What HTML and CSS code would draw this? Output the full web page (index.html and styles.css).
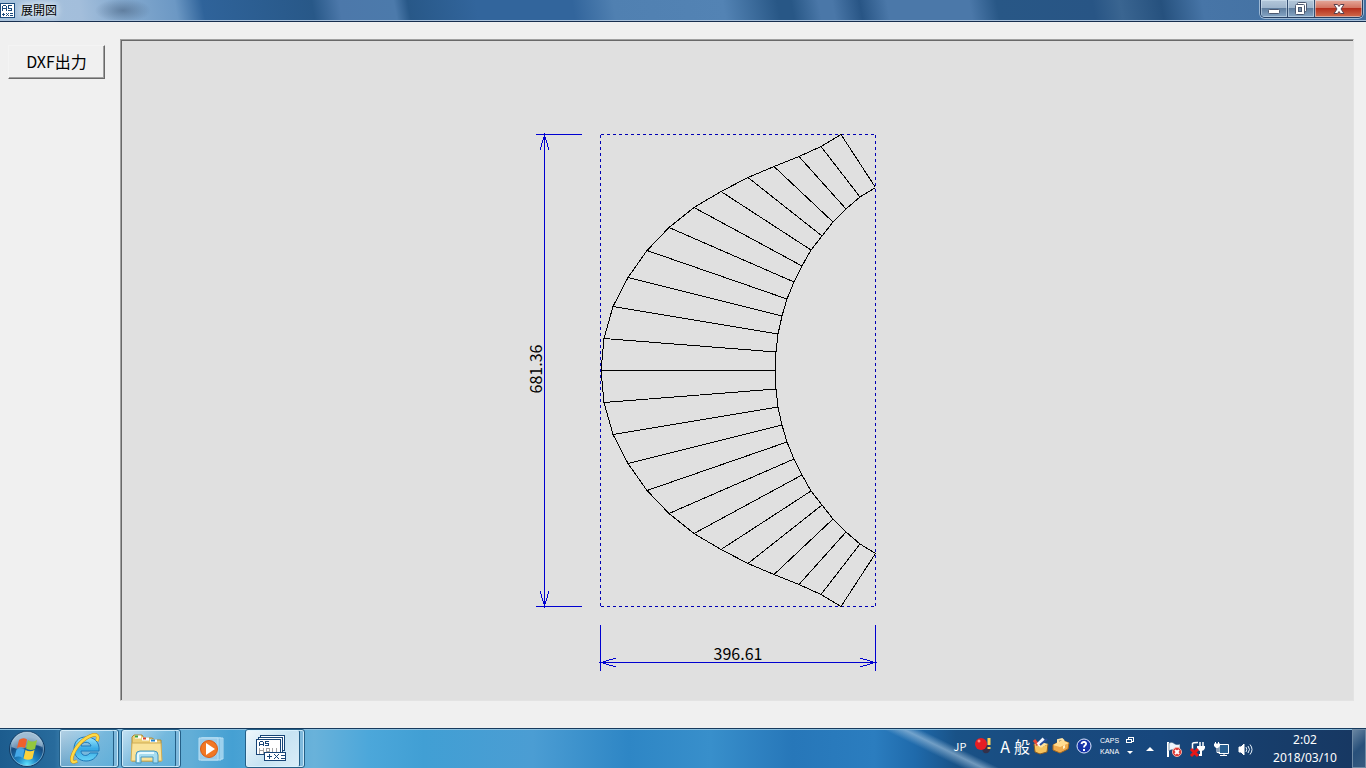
FILE: index.html
```html
<!DOCTYPE html>
<html lang="ja">
<head>
  <meta charset="UTF-8">
  <meta name="viewport" content="width=device-width, initial-scale=1.0">
  <title>展開図</title>
  <link rel="stylesheet" href="styles.css">
</head>
<body>

  <header class="titlebar">
    <svg class="app-icon" viewBox="0 0 15 15" shape-rendering="crispEdges" aria-hidden="true">
      <rect x="0.5" y="0.5" width="14" height="14" fill="#fff" stroke="#1b4a7c"/>
      <path d="M2.500 8V3M3 2.500H6M6.500 3V8M3 5.500H6M12 2.500H8.500V5.500H11.500V7.500H8M2 11.500H5M3.500 10V13M6 10L9 13M9 10L6 13M10 10.500H13M10 12.500H13" fill="none" stroke="#1b4a7c"/>
    </svg>
    <h1>展開図</h1>
    <div class="window-buttons">
      <button type="button" class="min" aria-label="最小化">
        <svg width="14" height="14" viewBox="0 0 14 14"><rect x="1.500" y="7.500" width="11" height="4" rx="1" fill="#fff" stroke="#4b5870"/></svg>
      </button>
      <button type="button" class="max" aria-label="元に戻す">
        <svg width="14" height="14" viewBox="0 0 14 14"><g fill="#fff" stroke="#4b5870"><rect x="3.500" y="0.500" width="9" height="9" rx="1"/><rect x="1.500" y="2.500" width="9" height="10" rx="1"/><rect x="4.500" y="5.500" width="3" height="4" fill="#7892ac"/></g></svg>
      </button>
      <button type="button" class="close" aria-label="閉じる">
        <svg width="14" height="14" viewBox="0 0 14 14"><path d="M2 2.500H5.500L7 4.500L8.500 2.500H12L9 7L12 11.500H8.500L7 9.500L5.500 11.500H2L5 7Z" fill="#fff" stroke="#59404c"/></svg>
      </button>
    </div>
  </header>

  <main class="window">
    <button type="button" class="export">DXF出力</button>

    <div class="canvas">
      <svg viewBox="122 41 1231 659" role="img" aria-label="展開図 396.61 × 681.36">
        <!-- bounding box -->
        <path class="bounds" d="M600.500 134.500H875.500M600.500 606.500H875.500M600.500 134.500V606.500M875.500 134.500V606.500"/>

        <!-- upper half of the pattern, mirrored below -->
        <g id="half" class="pattern">
          <path d="M841 134.500L821 146.500L799 156.500L774 166.500L748 177.500L721 191.500L694 207.500L669 227.500L647 250.500L628 277.500L613 306.500L604 338.500L601 370.500"/>
          <path d="M875.500 187.500L860 197L846 209L833 222L822 236L811 250L802 266L794 282L787 299L782 316L778 334L776 352L775.500 370.500"/>
          <path d="M841 134.500L875.500 187.500M821 146.500L860 197M799 156.500L846 209M774 166.500L833 222M748 177.500L822 236M721 191.500L811 250M694 207.500L802 266M669 227.500L794 282M647 250.500L787 299M628 277.500L782 316M613 306.500L778 334M604 338.500L776 352"/>
        </g>
        <use href="#half" transform="matrix(1 0 0 -1 0 741)"/>
        <path class="pattern" d="M601 370.500H776"/>

        <!-- dimensions -->
        <path class="dim" d="M536 134.500H582M536 606.500H582M544.500 134.500V606.500M540 150L544.500 135L549 150M540 591L544.500 606L549 591"/>
        <path class="dim" d="M600.500 625V671M875.500 625V671M600.500 662.500H875.500M616 658L601 662.500L616 667M860 658L875 662.500L860 667"/>
        <text class="value" x="738" y="660" text-anchor="middle">396.61</text>
        <text class="value" transform="translate(542 369) rotate(-90)" text-anchor="middle">681.36</text>
      </svg>
    </div>
  </main>

  <footer class="taskbar">
    <button type="button" class="start" aria-label="スタート">
      <svg width="38" height="38" viewBox="0 0 38 38">
        <defs>
          <radialGradient id="orb" cx="50%" cy="95%" r="80%">
            <stop offset="0" stop-color="#5fe4ff"/><stop offset=".35" stop-color="#1e84c4"/><stop offset=".75" stop-color="#164b80"/><stop offset="1" stop-color="#6e96b8"/>
          </radialGradient>
        </defs>
        <circle cx="19" cy="19" r="17.500" fill="url(#orb)" stroke="#123a62"/>
        <circle cx="19" cy="19" r="16.500" fill="none" stroke="#9dc4dc" stroke-opacity=".6"/>
        <path d="M3.500 17A15.500 15.500 0 0 1 34.500 17Q26 13 19 17T3.500 17Z" fill="#dcecf5" opacity=".45"/>
        <path d="M11 10Q15 7 19 9.500L17 18Q13 16 9 18Z" fill="#ee602c"/>
        <path d="M20 10Q24 13 29 10L27 19Q22 21 18 18.500Z" fill="#93c83e"/>
        <path d="M8.500 19.500Q13 17.500 16.500 19.500L14.500 28Q11 25.500 6.500 27.500Z" fill="#45a8e8"/>
        <path d="M17.500 20Q22 22.500 26.500 20L24.500 28.500Q20 31 15.500 28.500Z" fill="#fcd23c"/>
      </svg>
    </button>

    <nav class="tasks" aria-label="タスク">
      <button type="button" class="task open" aria-label="Internet Explorer">
        <svg width="34" height="34" viewBox="0 0 34 34">
          <defs><linearGradient id="ie" x2="0" y2="1"><stop stop-color="#9deaff"/><stop offset=".5" stop-color="#38a9e4"/><stop offset="1" stop-color="#66d3f7"/></linearGradient></defs>
          <path d="M18 5C10 5 6 10 6 17C6 24 11 29 18 29C24 29 28 26 30 21H22C19 25 13 24 13 19H31C32 10 26 5 18 5ZM13 14C14 9 22 9 23 14Z" fill="url(#ie)" stroke="#1e78b8"/>
          <path d="M29 9C31 4 29 2 25 3C15 6 7 15 4 25C3 30 5 31 9 29" fill="none" stroke="#c98c15" stroke-width="3.500"/>
          <path d="M29 9C31 4 29 2 25 3C15 6 7 15 4 25C3 30 5 31 9 29" fill="none" stroke="#ffda45" stroke-width="2.500"/>
        </svg>
      </button>
      <button type="button" class="task open" aria-label="エクスプローラー">
        <svg width="34" height="34" viewBox="0 0 34 34">
          <path d="M2 29V5L4 3H12L14 6H22L25 8H31V29Z" fill="#eed17a" stroke="#ac8a36"/>
          <path d="M5 5H11M12 7H19M20 9H27" stroke="#fff" stroke-width="3"/>
          <path d="M5 4.500H8" stroke="#3ba33c" stroke-width="2"/><path d="M13 6.500H16" stroke="#d8422e" stroke-width="2"/><path d="M21 8.500H25" stroke="#2486cf" stroke-width="2"/>
          <path d="M2 11H31L32 29H1Z" fill="#f9e39b" stroke="#d0ae57"/>
          <path d="M6 31V23Q6 19 10 19H24Q28 19 28 23V31H23V25H11V31Z" fill="#a6dcf0" stroke="#4796be"/>
          <path d="M8 30V23Q8 21 11 21H24" fill="none" stroke="#e6faff" stroke-width="2"/>
        </svg>
      </button>
      <button type="button" class="task" aria-label="Windows Media Player">
        <svg width="34" height="34" viewBox="0 0 34 34">
          <path d="M10 6H31V27H10Z" fill="#84c3e7" stroke="#b6dff4"/><path d="M9 6H29V28H9Z" fill="#84c3e7" stroke="#b6dff4"/><path d="M7 6H26V28H7Z" fill="#9acceb" stroke="#bae0f4"/>
          <circle cx="17" cy="17" r="8.500" fill="#f17724" stroke="#d85c18"/>
          <path d="M14 11L23 17L14 23Z" fill="#fff"/>
        </svg>
      </button>
      <button type="button" class="task open active" aria-label="AS 展開図">
        <svg width="34" height="34" viewBox="0 0 34 34" shape-rendering="crispEdges">
          <g fill="#fff" stroke="#174476"><path d="M6.500 3.500H30.500V18.500H6.500Z"/><path d="M4.500 5.500H28.500V20.500H4.500Z"/><path d="M2.500 7.500H26.500V22.500H2.500Z"/></g>
          <path d="M5.500 14V10M6 9.500H9M9.500 10V14M6 12.500H9M15 9.500H11.500V11.500H14.500V13.500H11" fill="none" stroke="#174476"/>
          <path d="M5.500 16V22M9.500 16V22M5 18.500H9M12.500 22V16.500H15.500V22M12 19.500H15M18.500 16V22M22.500 16V22" fill="none" stroke="#a3a3a3"/>
          <path d="M10.500 20.500H31.500V28.500H10.500Z" fill="#fff" stroke="#174476"/>
          <path d="M13 24.500H18M15.500 22V27M20 22L25 27M25 22L20 27M27 23.500H31M27 26.500H31" fill="none" stroke="#174476"/>
        </svg>
      </button>
    </nav>

    <div class="ime">
      <button type="button" class="lang">JP</button>
      <button type="button" class="brand" aria-label="IME">
        <svg width="18" height="18" viewBox="0 0 18 18"><path d="M10 8Q15 7 16 12Q16 17 10 16Q7 13 10 8Z" fill="#34314a"/><circle cx="7" cy="7" r="6" fill="#e51e24"/><circle cx="5" cy="4" r="1.500" fill="#ff8a80"/><path d="M15 1V8M15 10V12" stroke="#ffd257" stroke-width="3"/></svg>
      </button>
      <button type="button" class="mode">A</button>
      <button type="button" class="kanji">般</button>
      <button type="button" class="tool" aria-label="IMEパッド">
        <svg width="18" height="18" viewBox="0 0 18 18"><path d="M2 7L3 15L8 17L15 15L16 7L9 10Z" fill="#f5c35e" stroke="#8a5c22"/><path d="M2 7L9 5L16 7L9 11Z" fill="#ffe19a"/><path d="M2 3L6 8" stroke="#e64632" stroke-width="3"/><path d="M6 8L12 2" stroke="#f4f6ff" stroke-width="4"/><path d="M8 8L15 2" stroke="#284c9c" stroke-width="2"/></svg>
      </button>
      <button type="button" class="tool" aria-label="ツール">
        <svg width="18" height="18" viewBox="0 0 18 18"><path d="M1 8L10 3L17 6L16 12L8 16L1 13Z" fill="#efab4d" stroke="#a56920"/><path d="M1 8L10 3L17 6L8 10Z" fill="#ffdd92"/><path d="M6 6V3L10 2L12 4" fill="none" stroke="#ffe4a6" stroke-width="2"/><path d="M11 9L13 8V11L11 12Z" fill="#fff1c4"/></svg>
      </button>
      <button type="button" class="help" aria-label="ヘルプ">
        <svg width="16" height="16" viewBox="0 0 16 16"><circle cx="8" cy="8" r="7" fill="#1533a8" stroke="#dfe8ff"/><path d="M5.500 6Q6 3.500 8.500 4Q11 5 9.500 7Q8 8 8 9.500M8 11V13" fill="none" stroke="#fff" stroke-width="2"/></svg>
      </button>
      <div class="locks"><span>CAPS</span><span>KANA</span></div>
      <div class="bar-options">
        <button type="button" aria-label="言語バーの表示"><svg width="10" height="8" viewBox="0 0 10 8" shape-rendering="crispEdges"><path d="M3.500 3V1.500H8.500V5.500H7M1.500 3.500H6.500V6.500H1.500Z" fill="none" stroke="#fff"/></svg></button>
        <button type="button" aria-label="オプション"><svg width="10" height="8" viewBox="0 0 10 8"><path d="M2 3H8L5 6Z" fill="#fff"/></svg></button>
      </div>
    </div>

    <div class="tray">
      <button type="button" class="more" aria-label="隠れているインジケーターを表示します"><svg width="8" height="8" viewBox="0 0 8 8"><path d="M0 6L4 2L8 6Z" fill="#fff"/></svg></button>
      <button type="button" aria-label="アクション センター">
        <svg width="18" height="18" viewBox="0 0 18 18"><path d="M3 2V17" stroke="#fff" stroke-width="2"/><path d="M4 3Q7 1 10 4Q12 5 15 4V11Q11 12 9 10Q6 9 4 11Z" fill="#eef5fb" stroke="#23486b" stroke-width=".500"/><circle cx="12" cy="12" r="4.500" fill="#dc2e2b" stroke="#f7b7aa"/><path d="M10 10L14 14M14 10L10 14" stroke="#fff" stroke-width="2"/></svg>
      </button>
      <button type="button" aria-label="電源">
        <svg width="18" height="18" viewBox="0 0 18 18"><path d="M3.500 9V3.500Q4 2.500 9 2.500" fill="none" stroke="#fff" stroke-width="1.500"/><path d="M11 2V6M14 2V6" stroke="#fff" stroke-width="1.500"/><path d="M8 6H16V8Q15 11 12 11Q9 11 8 8Z" fill="#fff"/><path d="M12 10V15H10" fill="none" stroke="#fff" stroke-width="2"/><path d="M2 9L9 16M9 9L2 16" stroke="#e81717" stroke-width="3"/></svg>
      </button>
      <button type="button" aria-label="ネットワーク">
        <svg width="18" height="18" viewBox="0 0 18 18"><path d="M6 4.500H15.500V13.500H6Z" fill="#285f91" stroke="#fff"/><path d="M11 14V16M7 15.500H14" stroke="#fff"/><path d="M2.500 2V4M5.500 2V4M4 7V12.500H7" stroke="#fff" fill="none"/><path d="M1 3.500H7V6L5 8H3L1 6Z" fill="#fff"/></svg>
      </button>
      <button type="button" aria-label="音量">
        <svg width="18" height="18" viewBox="0 0 18 18"><path d="M2 7H4L7 4V15L4 12H2Z" fill="#fff" stroke="#fff"/><path d="M9 7Q10.500 9.500 9 12M11 6Q14 9.500 11 13M13 4.500Q17 9.500 13 14.500" fill="none" stroke="#e7f2fb"/></svg>
      </button>
    </div>
    <button type="button" class="clock"><time datetime="02:02">2:02</time><time datetime="2018-03-10">2018/03/10</time></button>
    <button type="button" class="show-desktop" aria-label="デスクトップの表示"></button>
  </footer>

</body>
</html>
```
FILE: styles.css
```css
* {
  box-sizing: border-box;
}

body {
  margin: 0;
  min-height: 100vh;
  display: flex;
  flex-direction: column;
  background-color: #f0f0f0;
  font-family: "Noto Sans CJK JP", sans-serif;
  color: #000;
}

button {
  padding: 0;
  border: 0;
  background: none;
  color: inherit;
  font: inherit;
}

svg {
  display: block;
}

/* title bar */
.titlebar {
  height: 22px;
  display: flex;
  align-items: center;
  border-bottom: 1px solid #182f50;
  box-shadow: inset 0 -1px #a9c1da;
  background:
    radial-gradient(ellipse 28px 12px at 9% 50%, rgba(72, 98, 128, 0.6), transparent),
    linear-gradient(80deg, #a5c2dd 0, #a3bedb 6%, #86abd0 9%, #6c98c4 13%, #2f639a 15%, #285888 23%, #4c78aa 25%, #4c7aab 29%, #285888 30%, #32659c 35%, #32659c 42%, #5080b1 45%, #5383b4 53%, #285786 57%, #285786 58%, #4a77a8 60%, #4a77a8 61%, #285585 63%, #4b78a9 65%, #4b78a9 71%, #285786 73%, #285585 80%, #3a6591 82%, #26517e 85%, #4775a7 88%, #416f9f 100%);
}

.app-icon {
  width: 15px;
  height: 15px;
}

.titlebar h1 {
  align-self: flex-start;
  margin: 0 auto 0 6px;
  font-size: 12px;
  line-height: 19px;
  font-weight: 400;
  text-shadow: 0 0 6px #fff, 0 0 10px #fff;
}

.window-buttons {
  align-self: flex-start;
  display: flex;
  height: 18px;
  margin-right: 3px;
  border: 1px solid #263f62;
  border-top: 0;
  border-radius: 0 0 5px 5px;
  box-shadow: 0 0 0 1px #9db9d5;
  overflow: hidden;
}

.window-buttons button {
  width: 27px;
  display: flex;
  align-items: center;
  justify-content: center;
  border-right: 1px solid #324d70;
  background: linear-gradient(#b4c7da 0, #9eb5cc 45%, #607e9f 50%, #85a5c5 100%);
  box-shadow: inset 0 0 0 1px rgba(220, 235, 248, 0.5);
}

.window-buttons .close {
  width: 47px;
  border-right: 0;
  background: linear-gradient(#e5aa9c 0, #d37562 45%, #b6301d 50%, #d16c4c 100%);
}

/* window content */
.window {
  flex: 1;
  min-height: 0;
  display: flex;
  align-items: flex-start;
  gap: 15px;
  padding: 17px 12px 27px 8px;
}

.export {
  width: 97px;
  height: 34px;
  margin-top: 6px;
  padding-bottom: 2px;
  border: 1px solid;
  border-color: #f4f4f4 #696969 #696969 #f4f4f4;
  box-shadow: inset -1px -1px #a0a0a0;
  font-size: 16px;
}

.canvas {
  flex: 1;
  align-self: stretch;
  border: 1px solid;
  border-color: #a0a0a0 #e3e3e3 #e3e3e3 #a0a0a0;
  box-shadow: inset 1px 1px #696969;
  background-color: #e0e0e0;
  padding: 1px 0 0 1px;
}

.canvas svg {
  width: 100%;
  height: 100%;
}

.pattern,
.bounds,
.dim {
  fill: none;
  stroke: #000;
  shape-rendering: crispEdges;
}

.bounds {
  stroke: #0000b4;
  stroke-dasharray: 3 3;
}

.dim {
  stroke: #0000d0;
}

.value {
  font-size: 16px;
}

/* taskbar */
.taskbar {
  height: 40px;
  display: flex;
  align-items: stretch;
  border-top: 1px solid #173a5d;
  box-shadow: inset 0 1px #8cc0df;
  background:
    linear-gradient(26deg, transparent 40%, rgba(170, 200, 225, 0.6) 50%, transparent 58%) 71% 0 / 130px 100% no-repeat,
    linear-gradient(90deg, #1c5c8e 0, #286b9c 4%, #67aad2 6%, #62aed7 14%, #45a0d3 17%, #69b2da 23%, #4ca7da 27%, #419fd4 31%, #4b9dd3 39%, #2e86c5 46%, #388fcb 52%, #2777b9 58%, #2b7dbf 64%, #1f6aab 67%, #195287 70%, #194a7e 76%, #17477d 85%, #173e6c 92%, #173761 100%);
  color: #fff;
}

.start {
  width: 54px;
  display: flex;
  align-items: center;
  justify-content: center;
}

.tasks {
  display: flex;
  gap: 2px;
  margin-left: 5px;
}

.task {
  width: 60px;
  display: flex;
  align-items: center;
  padding-left: 9px;
}

.task.open {
  padding-left: 8px;
  border: 1px solid #245f87;
  border-radius: 3px;
  background: linear-gradient(135deg, rgba(237, 248, 255, 0.7), rgba(144, 203, 233, 0.4) 50%, rgba(86, 176, 222, 0.5));
  box-shadow: inset 0 0 0 1px rgba(221, 244, 255, 0.8), inset -4px 0 #7fb9dc, inset -5px 0 #245f87;
}

.task.active {
  background: linear-gradient(135deg, #f0f8fd, #c7e3f2 50%, #dceff9);
}

.ime {
  display: flex;
  align-items: center;
  margin-left: auto;
  padding-bottom: 5px;
}

.ime button,
.tray button {
  width: 20px;
  display: flex;
  align-items: center;
  justify-content: center;
}

.ime .lang {
  font-size: 11px;
}

.ime .brand {
  margin: 0 4px 0 3px;
}

.ime .mode {
  width: 16px;
  font-size: 16px;
}

.ime .kanji {
  width: 18px;
  font-size: 16px;
}

.ime .help {
  margin: 0 6px 0 3px;
}

.locks {
  width: 22px;
  display: flex;
  flex-direction: column;
  gap: 1px;
  font-family: "Liberation Sans", sans-serif;
  font-size: 7px;
  line-height: 10px;
}

.bar-options {
  display: flex;
  flex-direction: column;
  gap: 4px;
}

.ime .bar-options button {
  width: 16px;
}

.tray {
  display: flex;
  align-items: center;
}

.tray button {
  width: 24px;
}

.clock {
  width: 94px;
  display: flex;
  flex-direction: column;
  align-items: center;
  justify-content: center;
  font-family: "Noto Sans", sans-serif;
  font-size: 12px;
  line-height: 18px;
}

.show-desktop {
  width: 14px;
  border: 1px solid #6f8ba6;
  background: linear-gradient(135deg, #6885a1, #28507a 50%, #385b80);
}
```
